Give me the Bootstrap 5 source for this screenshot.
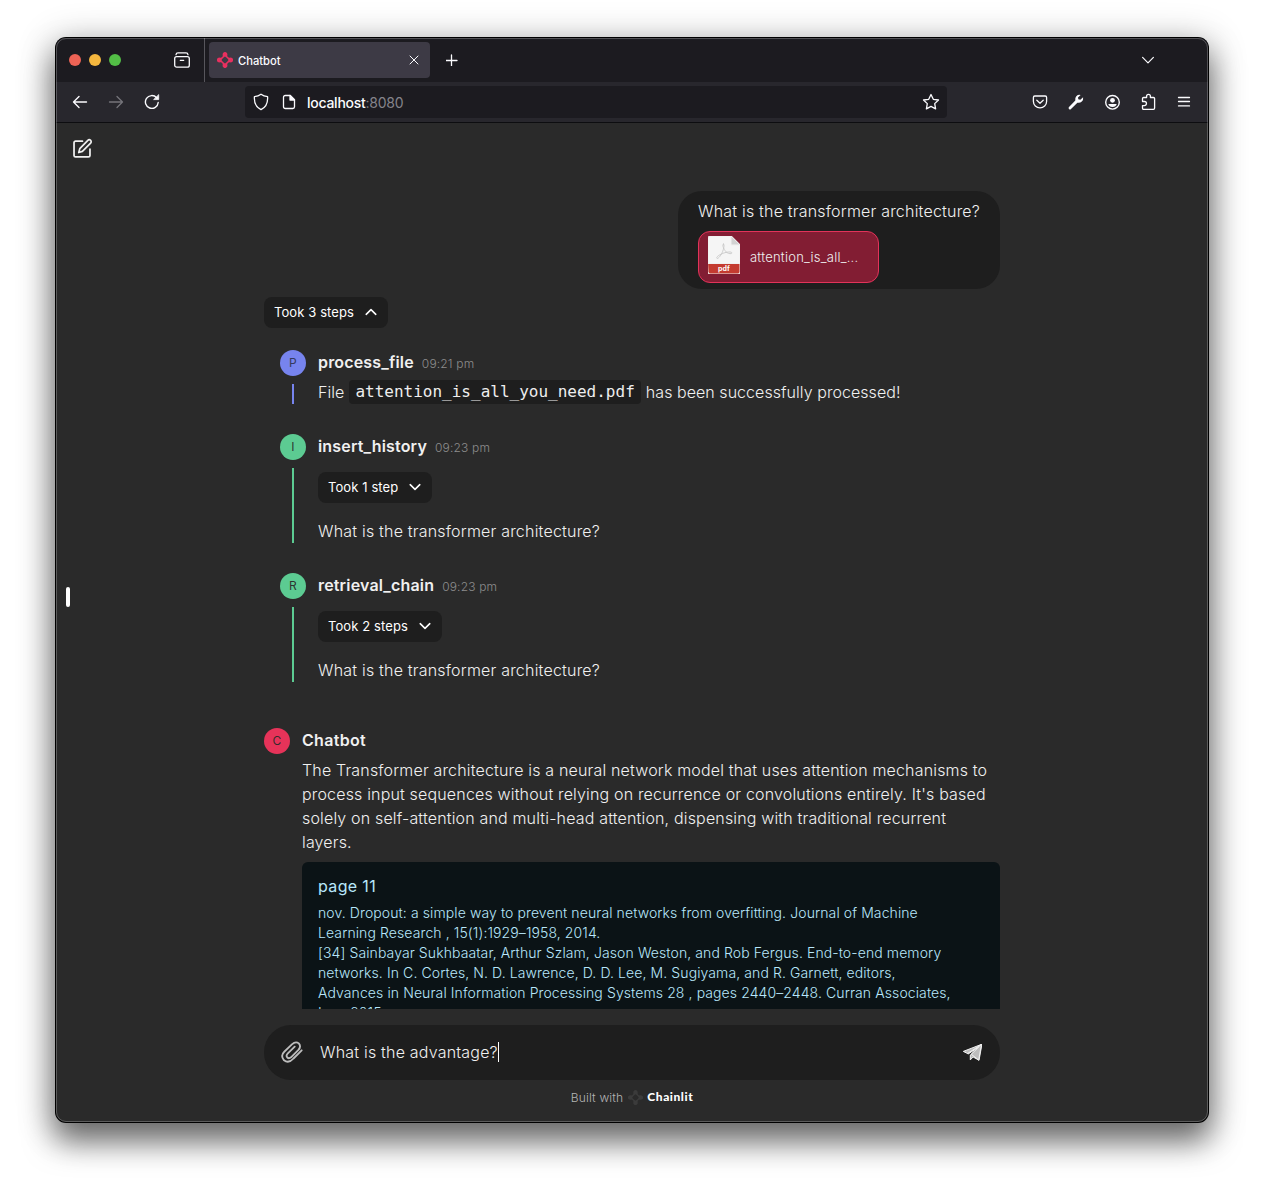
<!DOCTYPE html>
<html lang="en" data-bs-theme="dark">
<head>
<meta charset="utf-8">
<meta name="viewport" content="width=device-width, initial-scale=1">
<title>Chatbot</title>
<link href="https://cdn.jsdelivr.net/npm/bootstrap@5.3.0/dist/css/bootstrap.min.css" rel="stylesheet">
<style>
body{background:#fff;font-family:Inter,"Liberation Sans",sans-serif;color:#f0f0f0;font-size:16px;font-weight:350;line-height:24px;letter-spacing:.2px;height:1196px;overflow:hidden;padding:38px 56px 74px}
svg{display:block;flex:none;fill:none;stroke:currentColor;stroke-linecap:round;stroke-linejoin:round}
.win{height:1084px;background:#2a2a2a;border-radius:10px;box-shadow:0 0 0 1px #000,0 18px 30px 2px rgba(0,0,0,.5),0 5px 36px 4px rgba(0,0,0,.23)}
.win::after{content:"";position:absolute;inset:0;border:1px solid rgba(255,255,255,.24);border-radius:10px;pointer-events:none}
.tabbar{height:44px;background:#1c1b20;color:#fbfbfe}
.dot{width:12px;height:12px;border-radius:50%}
.lights{padding-left:13px;width:118px}
.archive{width:30.5px;border-right:1px solid #57565c;height:100%}
.tab{width:221px;height:36px;background:#3d3a45;border-radius:4px;margin-left:4px;padding:0 10px 0 8px;font-size:11.2px;font-weight:500;letter-spacing:-.02px}
.tabname{padding:2px 0 0 5.500px}
.toolbar{height:41px;background:#28272d;border-bottom:1px solid #0d0d10;color:#fbfbfe}
.urlbar{width:702px;height:32px;background:#1c1b20;border-radius:4px;margin-left:85px;padding:0 7px}
.url{font-size:14px;letter-spacing:-.26px;font-weight:500;padding-top:2px;margin-left:11px}
.url span{color:#85848b;font-weight:400}
.page{flex:1;min-height:0}
.grip{left:10px;top:464px;width:4px;height:20px;border-radius:2px;background:#fff}
.newchat{left:15px;top:15px}
.scroller{height:886px;overflow:hidden;padding-top:68px}
.col736{width:736px;margin:0 auto}
.bubble{background:#1e1e1e;border-radius:24px;padding:8px 20px 6px;width:322px;white-space:nowrap}
.filecard{width:181px;height:52px;background:#821d33;border:1px solid #e2335a;border-radius:12px;padding:4px 9px;font-size:13px;margin-top:8px}
.stepbtn{display:inline-flex;align-items:center;background:#1e1e1e;border:0;border-radius:8px;color:#fff;height:31px;padding:0 10px 1px;font-size:13px;letter-spacing:.1px;gap:10px;font-weight:400}
.avatar{width:26px;height:26px;border-radius:50%;font-size:12px;font-weight:400;line-height:26px;text-align:center;color:rgba(42,42,42,.95);flex:none}
.ind{background:#7784ee;color:#353a5c}.grn{background:#5ccb92}.pnk{background:#e63359}
.railbar{width:2px;margin-top:8px;flex:1}
.step{gap:12px;margin-bottom:30px}
.who{font-weight:600;height:26px;line-height:25px;letter-spacing:.17px}
.who small{font-size:12px;font-weight:350;color:#8d8d8d;margin-left:8px;position:relative;top:-.5px}
.prose{letter-spacing:.165px;margin-top:4px;white-space:nowrap}
.fileline{letter-spacing:.05px;margin-top:4px;height:24px}
.fname{font-family:"DejaVu Sans Mono",monospace;font-size:16px;color:#eee;background:#1e1e1e;border-radius:4px;padding:3px 6.500px;letter-spacing:0;display:inline-block;line-height:18px;vertical-align:1px}
.source{background:#0b1316;color:#b8e7fb;border-radius:6px;padding:12px 0 12px 16px;margin-top:8px;height:200px}
.srctitle{font-weight:400;letter-spacing:.35px}
.source p{font-size:14px;line-height:20px;margin:5px 0 0;letter-spacing:.1px;white-space:nowrap}
.composer{height:55px;background:#1e1e1e;border-radius:27px;margin-top:16px!important;padding:0 16px 1px}
.caret{width:1px;height:20px;background:#fff}
.built{font-size:12px;color:#b4b4b4;margin-top:6px;height:24px;letter-spacing:.17px}
.brand{font-family:Lato,sans-serif;font-weight:900;font-size:12px;color:#fff;letter-spacing:.55px;margin-top:-2px}
</style>
<script src="https://cdn.jsdelivr.net/npm/bootstrap@5.3.0/dist/js/bootstrap.bundle.min.js"></script>
</head>
<body>
<svg width="0" height="0" class="position-absolute"><defs><g id="chainmark" stroke="none"><path fill-rule="evenodd" d="M8 0A2.400 2.400 0 0 1 10.300 3Q10.100 4.300 10.900 5.100T13 5.700A2.400 2.400 0 1 1 13 10.300Q11.700 10.100 10.900 10.900T10.300 13A2.400 2.400 0 1 1 5.700 13Q5.900 11.700 5.100 10.900T3 10.300A2.400 2.400 0 1 1 3 5.700Q4.300 5.900 5.100 5.100T5.700 3A2.400 2.400 0 0 1 8 0ZM8 4.500Q7 5.100 6.050 6.050T4.500 8Q5.100 9 6.050 9.950T8 11.500Q9 10.900 9.950 9.950T11.500 8Q10.900 7 9.950 6.050T8 4.500Z"/></g></defs></svg>
<div class="win position-relative overflow-visible d-flex flex-column">
  <div class="tabbar d-flex align-items-center rounded-top-3">
    <div class="lights d-flex gap-2"><i class="dot" style="background:#ed6355"></i><i class="dot" style="background:#f5b73e"></i><i class="dot" style="background:#53be46"></i></div>
    <div class="archive d-flex align-items-center"><svg width="16" height="16" viewBox="0 0 16 16" stroke-width="1.300"><rect x=".7" y="4.600" width="14.600" height="10.600" rx="2"/><path d="M2 2.700Q2.200.8 4 .8h8q1.800 0 2 1.900M6.300 8.300h3.400"/></svg></div>
    <div class="tab d-flex align-items-center">
      <svg width="16" height="16" viewBox="0 0 16 16" style="fill:#e8305f"><use href="#chainmark"/></svg>
      <span class="tabname flex-fill">Chatbot</span>
      <svg width="12" height="12" viewBox="0 0 12 12" stroke-width="1"><path d="M2 2l8 8M10 2l-8 8"/></svg>
    </div>
    <svg class="ms-3" width="12" height="12" viewBox="0 0 12 12" stroke-width="1.300"><path d="M5.500 1v11M0 6.500h11"/></svg>
    <svg class="ms-auto" style="margin-right:54px" width="12" height="12" viewBox="0 0 12 12" stroke-width="1.200"><path d="M.6 3.400L6 8.800l5.400-5.400"/></svg>
  </div>
  <div class="toolbar d-flex align-items-center">
    <svg style="margin-left:16px" width="16" height="16" viewBox="0 0 16 16" stroke-width="1.400"><path d="M14.500 8H1.500M7 2.500L1.500 8 7 13.500"/></svg>
    <svg style="margin-left:20px;color:#75747a" width="16" height="16" viewBox="0 0 16 16" stroke-width="1.300"><path d="M1.500 8h13M9 2.500L14.500 8 9 13.500"/></svg>
    <svg style="margin-left:20px" width="16" height="16" viewBox="0 0 16 16" stroke-width="1.400"><path d="M14.200 8.500A6.400 6.400 0 1 1 12.600 3.700"/><path d="M14.700 1v4.600H10Z" fill="currentColor" stroke-width=".8"/></svg>
    <div class="urlbar d-flex align-items-center">
      <svg width="18" height="18" viewBox="0 0 18 18" stroke-width="1.300"><path d="M9 1.200C7 2.700 5 3.400 2.400 3.700 2 9.600 4.200 14.200 9 16.600 13.800 14.200 16 9.600 15.600 3.700 13 3.400 11 2.700 9 1.200Z"/></svg>
      <svg style="margin-left:12px" width="14" height="16" viewBox="0 0 14 16" stroke-width="1.300"><path d="M3.200 1.500h5l4.300 4.300v7a1.700 1.700 0 0 1-1.700 1.700H3.200a1.700 1.700 0 0 1-1.700-1.700V3.200a1.700 1.700 0 0 1 1.700-1.700Z"/><path d="M8 1.500v4.500h4.500Z" fill="currentColor"/></svg>
      <span class="url flex-fill">localhost<span>:8080</span></span>
      <svg width="18" height="18" viewBox="0 0 18 18" stroke-width="1.300"><path d="M9 1.500l2.300 4.800 5.200.7-3.800 3.600.9 5.300L9 13.400l-4.600 2.500.9-5.300L1.500 7l5.200-.7Z"/></svg>
    </div>
    <div class="ms-auto d-flex align-items-center" style="gap:20px;margin-right:16px">
      <svg width="16" height="16" viewBox="0 0 16 16" stroke-width="1.300"><path d="M2.800 2h10.400q1.400 0 1.400 1.400V7.500a6.600 6.300 0 0 1-13.200 0V3.400Q1.400 2 2.800 2Z"/><path d="M4.800 6.300L8 9.200l3.200-2.900"/></svg>
      <svg width="16" height="16" viewBox="0 0 16 16" stroke-width="0"><path fill="currentColor" d="M12.600.9Q10.200.3 8.300 2.200 6.700 4 7.300 6.600L1 13a1.350 1.350 0 0 0 2 2L9.400 8.700q2.600.6 4.400-1.100Q15.600 5.800 15.100 3.300L12.300 5.700 10.300 5.300 10 3.400Z"/></svg>
      <svg width="16" height="16" viewBox="0 0 16 16" stroke-width="1.400"><circle cx="8.500" cy="8.300" r="6.800"/><circle cx="8.500" cy="6.300" r="2.400" fill="currentColor" stroke="none"/><path d="M4.300 9.900h8.400Q12 12.900 8.500 12.900T4.300 9.900Z" fill="currentColor" stroke="none"/></svg>
      <svg width="16" height="18" viewBox="0 0 16 18" stroke-width="1.300"><path d="M2.500 8V5.600q0-1.100 1.100-1.100h3V3.300a1.900 1.900 0 0 1 3.800 0V4.500h3q1.200 0 1.200 1.100v9.500q0 1.200-1.200 1.200H3.600q-1.100 0-1.100-1.200v-2.500h1.900a2 2 0 0 0 0-4.100H2.500Z"/></svg>
      <svg width="16" height="16" viewBox="0 0 16 16" stroke-width="1.300"><path d="M2.500 3.500h11M2.500 7.500h11M2.500 11.900h11"/></svg>
    </div>
  </div>
  <main class="page position-relative">
    <svg class="newchat position-absolute" width="22" height="22" viewBox="0 0 24 24" stroke-width="1.900"><path d="M12.500 3.500H5a1.700 1.700 0 0 0-1.700 1.700V19A1.700 1.700 0 0 0 5 20.700h14a1.700 1.700 0 0 0 1.700-1.700v-7"/><path d="M18.400 2.600a2.100 2.100 0 0 1 3 3L12.400 14.600 8.500 15.800l1.100-4.200Z"/></svg>
    <div class="grip position-absolute"></div>
    <div class="scroller">
      <div class="col736">
        <div class="bubble ms-auto">
          <div>What is the transformer architecture?</div>
          <div class="filecard d-flex">
            <svg width="32" height="38" viewBox="0 0 32 38" stroke="none"><path d="M2 0h21l9 9v27a2 2 0 0 1-2 2H2a2 2 0 0 1-2-2V2a2 2 0 0 1 2-2Z" fill="#f5f5f5"/><path d="M23 0v9h9Z" fill="#d2d2d2"/><path d="M0 27.500h32V36a2 2 0 0 1-2 2H2a2 2 0 0 1-2-2Z" fill="#c43b30"/><path d="M15.500 8c-2 0 .2 5.300 2.500 7.800 2 2.100 6 2.400 5.900 1.100-.2-1.600-5.400-.9-8.300.2-3.500 1.300-7.100 3.300-6.900 4.900.4 1.700 3.400-1.100 5.400-5.200C15.400 14 17.100 8 15.500 8Z" fill="none" stroke="#c8c8c8" stroke-width=".9"/><text x="16" y="34.900" text-anchor="middle" font-size="7" font-weight="700" fill="#fff" stroke="none" letter-spacing=".2" font-family="Inter,sans-serif">pdf</text></svg>
            <span class="align-self-center" style="margin-left:10px;letter-spacing:.23px">attention_is_all_...</span>
          </div>
        </div>
        <button class="stepbtn mt-2">Took 3 steps <svg width="14" height="14" viewBox="0 0 14 14" stroke-width="1.600"><path d="M2.200 9.300L7 4.700l4.800 4.600"/></svg></button>
        <div class="ps-3" style="margin-top:22px">
          <div class="step d-flex">
            <div class="d-flex flex-column align-items-center"><div class="avatar ind">P</div><div class="railbar ind"></div></div>
            <div><div class="who">process_file<small>09:21 pm</small></div><div class="fileline">File <code class="fname">attention_is_all_you_need.pdf</code> has been successfully processed!</div></div>
          </div>
          <div class="step d-flex">
            <div class="d-flex flex-column align-items-center"><div class="avatar grn">I</div><div class="railbar grn"></div></div>
            <div><div class="who">insert_history<small>09:23 pm</small></div><button class="stepbtn d-flex" style="margin:12px 0 16px">Took 1 step <svg width="14" height="14" viewBox="0 0 14 14" stroke-width="1.600"><path d="M2.200 4.700L7 9.300l4.800-4.600"/></svg></button><div>What is the transformer architecture?</div></div>
          </div>
          <div class="step d-flex">
            <div class="d-flex flex-column align-items-center"><div class="avatar grn">R</div><div class="railbar grn"></div></div>
            <div><div class="who">retrieval_chain<small>09:23 pm</small></div><button class="stepbtn d-flex" style="margin:12px 0 16px">Took 2 steps <svg width="14" height="14" viewBox="0 0 14 14" stroke-width="1.600"><path d="M2.200 4.700L7 9.300l4.800-4.600"/></svg></button><div>What is the transformer architecture?</div></div>
          </div>
        </div>
        <div class="d-flex" style="gap:12px;margin-top:46px">
          <div class="avatar pnk">C</div>
          <div style="width:698px">
            <div class="who" style="letter-spacing:.3px">Chatbot</div>
            <div class="prose">The Transformer architecture is a neural network model that uses attention mechanisms to<br>process input sequences without relying on recurrence or convolutions entirely. It's based<br>solely on self-attention and multi-head attention, dispensing with traditional recurrent<br>layers.</div>
            <div class="source"><div class="srctitle">page 11</div>
              <p>nov. Dropout: a simple way to prevent neural networks from overfitting. Journal of Machine<br>Learning Research , 15(1):1929–1958, 2014.<br>[34] Sainbayar Sukhbaatar, Arthur Szlam, Jason Weston, and Rob Fergus. End-to-end memory<br>networks. In C. Cortes, N. D. Lawrence, D. D. Lee, M. Sugiyama, and R. Garnett, editors,<br>Advances in Neural Information Processing Systems 28 , pages 2440–2448. Curran Associates,<br>Inc., 2015.</p>
            </div>
          </div>
        </div>
      </div>
    </div>
    <div class="composer col736 d-flex align-items-center">
      <svg width="24" height="24" viewBox="0 0 24 24" stroke-width="1.800" style="color:#bdbdbd"><path d="M21.700 10.300L13.500 18.500Q8.600 24 4 20.300 0 15.700 4.500 11.500L11.900 4.300Q15.700.900 18.800 3.400 21.600 6.600 18.200 10.200L11 17.300Q8.900 19 7.300 17.500 5.700 15.700 7.600 13.700L14.700 6.700"/></svg>
      <span style="margin-left:16px">What is the advantage?</span><i class="caret"></i>
      <svg class="ms-auto" style="margin-right:2px" width="19" height="17" viewBox="0 0 19 17" stroke="none"><path d="M18.600.3L.3 7.400l4.200 2.100Z" fill="#bdbdbd"/><path d="M18.600.3L4.500 9.500 5.300 9.900 15.800 3 7.300 11v4.900l2.800-2.900 5.600 3.100Z" fill="#bdbdbd"/><path d="M16 2.700L8.300 10.300 15.700 16.100 18.400.9Z" fill="#bdbdbd"/></svg>
    </div>
    <div class="built d-flex justify-content-center align-items-center"><span>Built with</span><svg style="margin:-2px 4px 0 5px;fill:#3b3b3b" width="15" height="15" viewBox="0 0 16 16"><use href="#chainmark"/></svg><span class="brand">Chainlit</span></div>
  </main>
</div>
</body>
</html>
